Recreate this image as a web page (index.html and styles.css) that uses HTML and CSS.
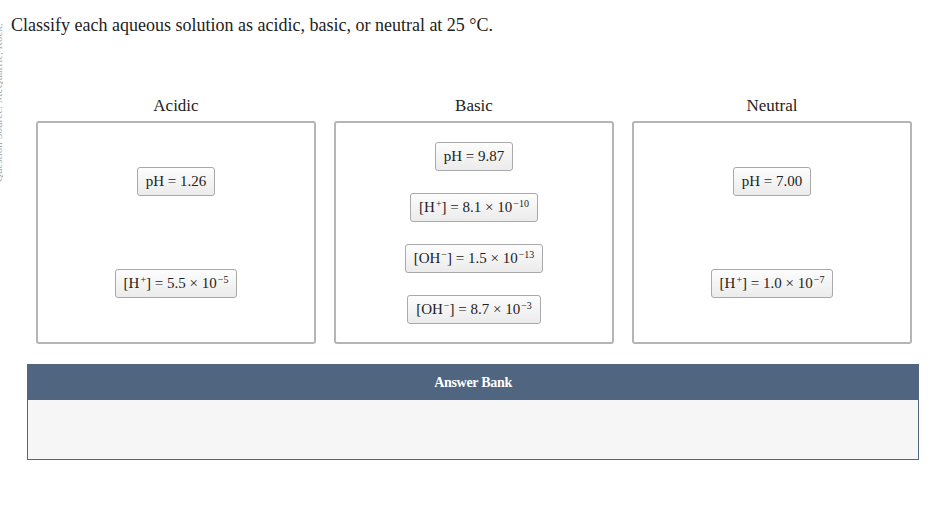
FILE: index.html
```html
<!DOCTYPE html>
<html>
<head>
<meta charset="utf-8">
<link rel="stylesheet" href="styles.css">
</head>
<body>
<div class="page">
  <div class="side"><span class="side-text">Question Source: McQuarrie, Rock, And Gallogly 4e - General Chemistry</span></div>
  <div class="main">
    <p class="prompt">Classify each aqueous solution as acidic, basic, or neutral at 25 °C.</p>
    <div class="bins">
      <div class="bin">
        <div class="bin-title">Acidic</div>
        <div class="bin-box spread">
          <div class="tile">pH = 1.26</div>
          <div class="tile">[H<sup>+</sup>] = 5.5 × 10<sup>−5</sup></div>
        </div>
      </div>
      <div class="bin">
        <div class="bin-title">Basic</div>
        <div class="bin-box tight">
          <div class="tile">pH = 9.87</div>
          <div class="tile">[H<sup>+</sup>] = 8.1 × 10<sup>−10</sup></div>
          <div class="tile">[OH<sup>−</sup>] = 1.5 × 10<sup>−13</sup></div>
          <div class="tile">[OH<sup>−</sup>] = 8.7 × 10<sup>−3</sup></div>
        </div>
      </div>
      <div class="bin">
        <div class="bin-title">Neutral</div>
        <div class="bin-box spread">
          <div class="tile">pH = 7.00</div>
          <div class="tile">[H<sup>+</sup>] = 1.0 × 10<sup>−7</sup></div>
        </div>
      </div>
    </div>
    <div class="bank">
      <div class="bank-head">Answer Bank</div>
      <div class="bank-body"></div>
    </div>
  </div>
</div>
</body>
</html>
```
FILE: styles.css
```css
html, body {
  margin: 0;
  padding: 0;
  background: #fff;
}
body {
  font-family: "Liberation Serif", "Times New Roman", serif;
  color: #222;
}
.page {
  display: flex;
  width: 934px;
  height: 530px;
}
.side {
  width: 3px;
  overflow: hidden;
  flex: none;
  padding-top: 22px;
}
.side-text {
  display: block;
  writing-mode: vertical-rl;
  transform: rotate(180deg);
  font-size: 11px;
  color: #aaa;
  white-space: nowrap;
  margin-left: -8px;
  height: 160px;
  overflow: hidden;
}
.main {
  flex: 1;
  padding-left: 8px;
}
.prompt {
  margin: 15px 0 0 0;
  font-size: 18px;
  line-height: 20px;
}
.bins {
  display: flex;
  gap: 18px;
  margin: 61px 0 0 25px;
}
.bin {
  width: 280px;
  display: flex;
  flex-direction: column;
  align-items: stretch;
}
.bin-title {
  text-align: center;
  font-size: 17px;
  line-height: 20px;
  height: 20px;
  margin-bottom: 5px;
}
.bin-box {
  height: 223px;
  box-sizing: border-box;
  border: 2px solid #b5b5b5;
  border-radius: 3px;
  display: flex;
  flex-direction: column;
  align-items: center;
  justify-content: center;
}
.spread { gap: 73px; }
.tight { gap: 22px; }
.tile {
  height: 29px;
  box-sizing: border-box;
  padding: 0 8px;
  border: 1px solid #a9a9a9;
  border-radius: 3px;
  background: linear-gradient(#fdfdfd, #ebebeb);
  font-size: 15px;
  line-height: 27px;
  white-space: nowrap;
  color: #222;
}
.tile sup {
  font-size: 10px;
  line-height: 0;
  vertical-align: 5px;
  margin-left: 1px;
}
.bank {
  margin: 20px 0 0 16px;
  width: 892px;
  box-sizing: border-box;
  border: 1px solid #506580;
}
.bank-head {
  height: 35px;
  background: #506580;
  color: #fff;
  font-weight: bold;
  font-size: 14px;
  line-height: 35px;
  text-align: center;
  letter-spacing: -0.3px;
}
.bank-body {
  height: 59px;
  background: #f6f6f6;
}
```
